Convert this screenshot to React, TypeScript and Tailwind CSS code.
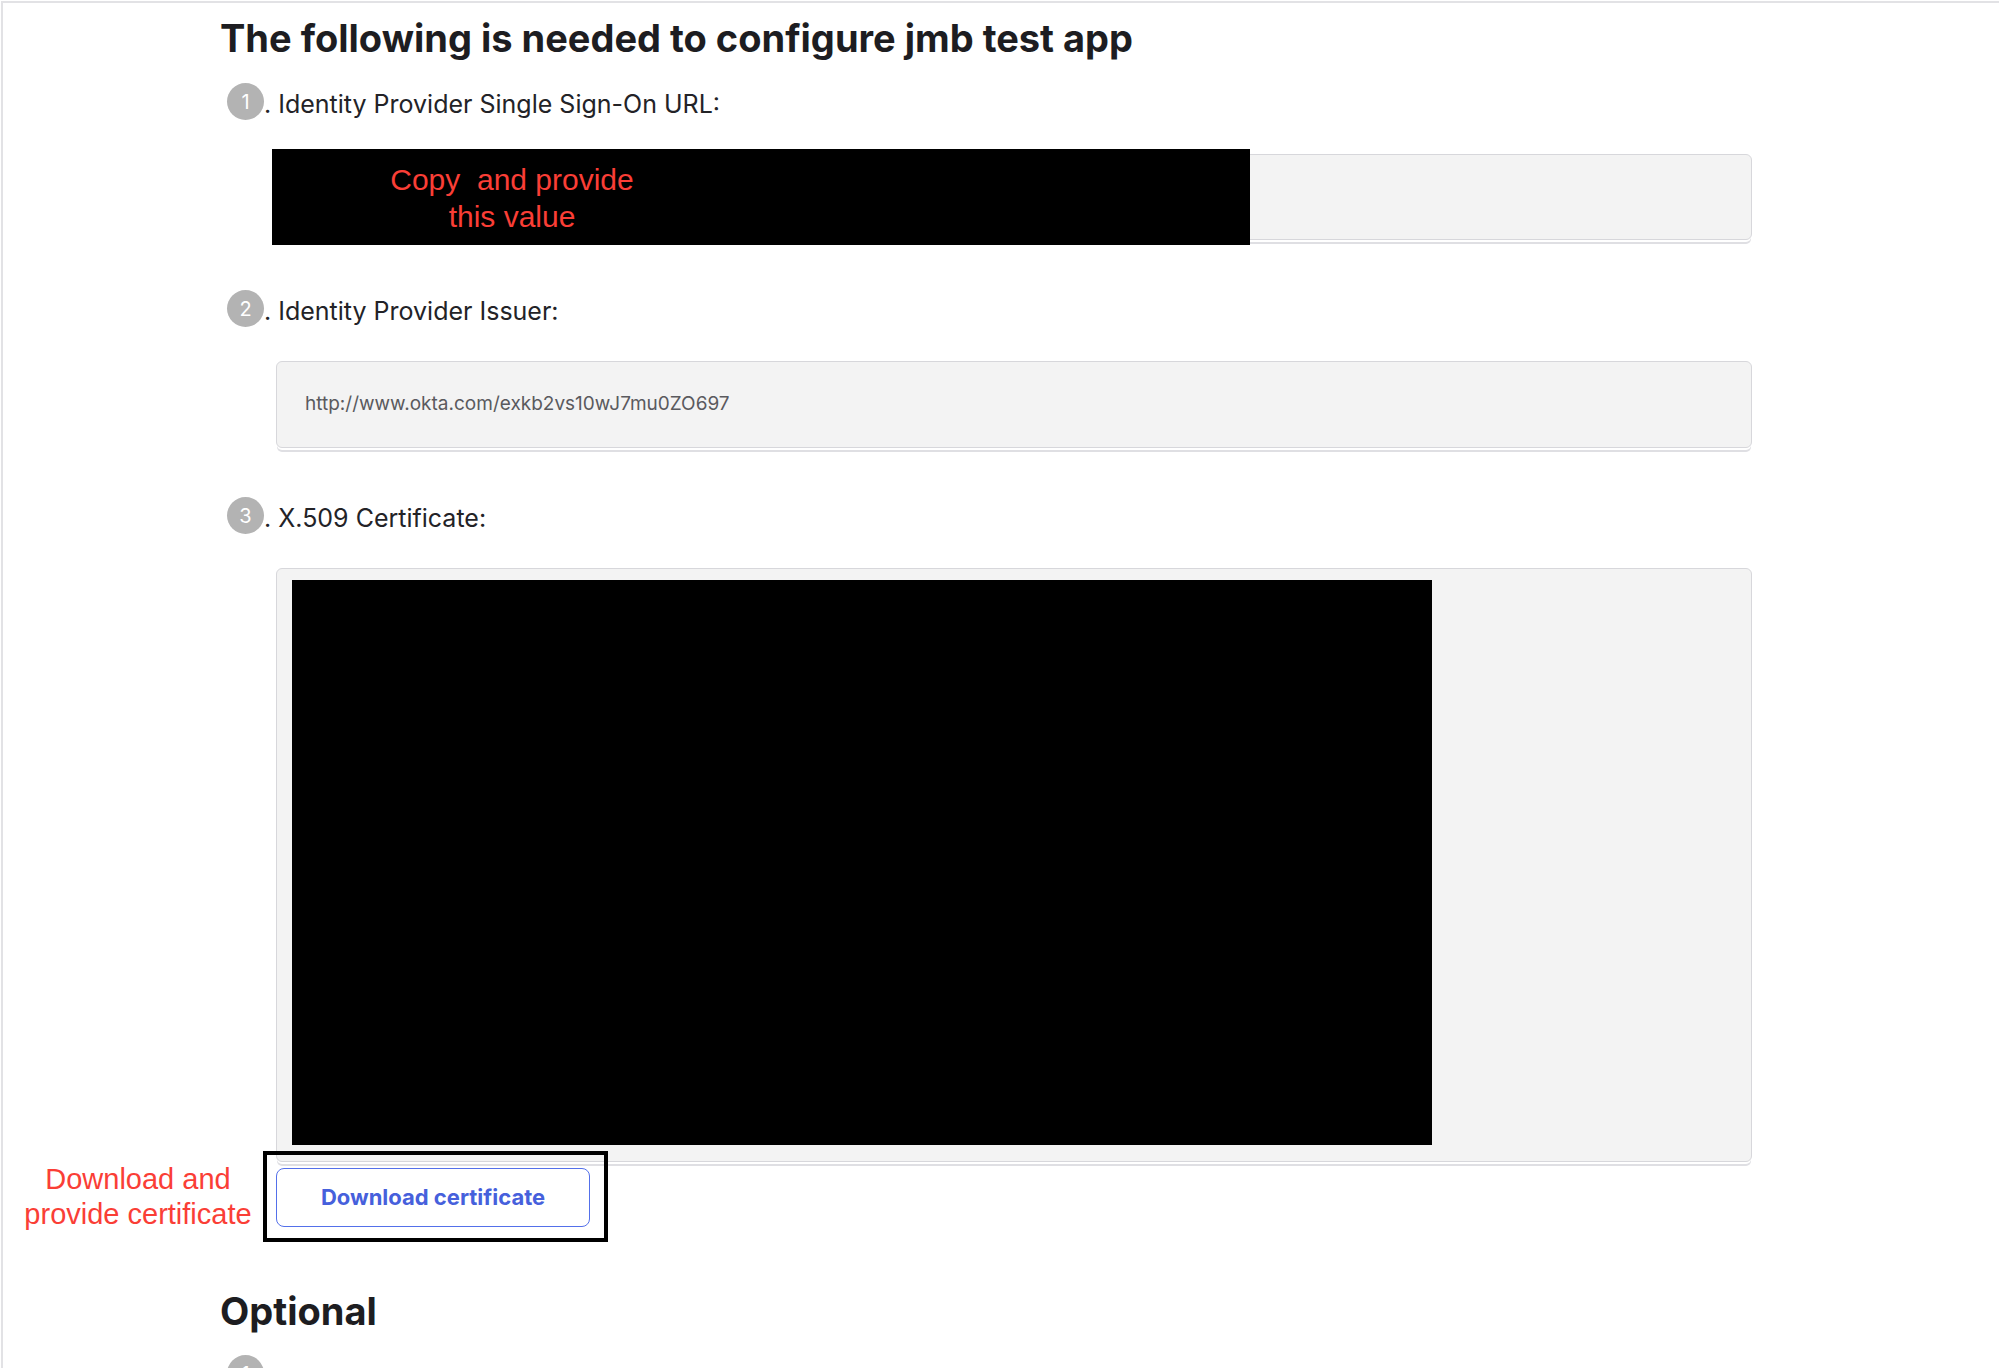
const Step = ({ n, label, textPad = 'pt-[5px]' }: { n: number; label: string; textPad?: string }) => (
  <div className="ml-[7px] flex h-[37px] items-center">
    <span className="flex h-[37px] w-[37px] shrink-0 items-center justify-center rounded-full bg-[#b3b3b3] text-[20px] text-white">
      {n}
    </span>
    <span className={`${textPad} text-[25px] leading-none text-[#232327]`}>. {label}</span>
  </div>
);

const fieldBox =
  'ml-[56px] mt-[34px] w-[1476px] rounded-[6px] border border-[#d7d7db] bg-[#f3f3f3] shadow-[0_3px_0_-1px_#ffffff,0_5px_0_-1px_#dfdfe3]';

const App = () => {
  return (
    <div className="h-screen overflow-hidden bg-white font-['Inter',sans-serif] text-[#1d1d21]">
      <div className="ml-[1px] mt-[1px] min-h-screen border-l-2 border-t-2 border-[#e2e2e5] pl-[217px] pt-[12px]">
        <h1 className="text-[38px] font-bold leading-[46px]">
          The following is needed to configure jmb test app
        </h1>

        <div className="mt-[22px]">
          <Step n={1} label="Identity Provider Single Sign-On URL:" />
        </div>
        <div className={`${fieldBox} relative h-[86px]`}>
          {/* redaction overlay */}
          <div className="absolute -left-[5px] -top-[6px] h-[96px] w-[978px] bg-black">
            <div className="w-[480px] whitespace-pre pt-[12px] text-center font-['Liberation_Sans',Arial,sans-serif] text-[30px] leading-[37px] text-[#fa3e36]">
              {'Copy  and provide\nthis value'}
            </div>
          </div>
        </div>

        <div className="mt-[50px]">
          <Step n={2} label="Identity Provider Issuer:" />
        </div>
        <div className={`${fieldBox} flex h-[87px] items-center pl-[28px]`}>
          <span className="text-[19px] text-[#5a5a5e]">http://www.okta.com/exkb2vs10wJ7mu0ZO697</span>
        </div>

        <div className="mt-[49px]">
          <Step n={3} label="X.509 Certificate:" />
        </div>
        <div className={`${fieldBox} h-[594px] pl-[15px] pt-[11px]`}>
          <div className="h-[565px] w-[1140px] bg-black" />
        </div>

        <div className="relative ml-[56px] mt-[6px] h-[59px] w-[314px]">
          <div className="absolute left-[-258px] top-[-6px] w-[240px] text-center font-['Liberation_Sans',Arial,sans-serif] text-[29px] leading-[35px] text-[#fa3e36]">
            Download and
            <br />
            provide certificate
          </div>
          <button className="flex h-full w-full items-center justify-center rounded-[8px] border-[1.5px] border-[#5470ea] bg-white text-[22px] font-bold text-[#4660dc]">
            Download certificate
          </button>
          <div className="pointer-events-none absolute left-[-13px] top-[-17px] h-[91px] w-[345px] border-4 border-black" />
        </div>

        <h2 className="mt-[61px] text-[38px] font-bold leading-[46px]">Optional</h2>

        <div className="mt-[21px]">
          <Step n={1} label="Provide the following IDP metadata to your SP provider." textPad="pt-[10px]" />
        </div>
      </div>
    </div>
  );
};

export default App;
